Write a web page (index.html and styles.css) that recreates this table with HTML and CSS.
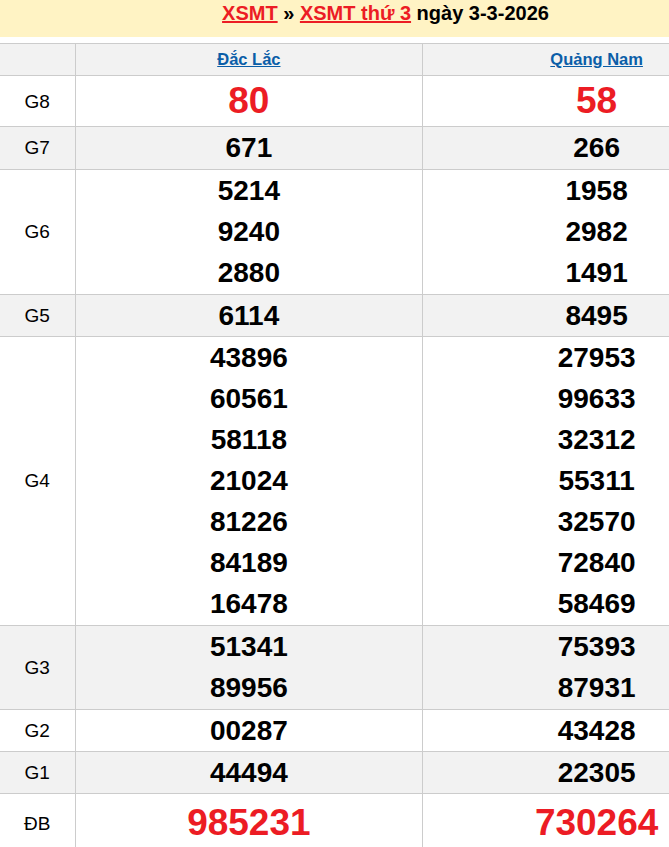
FILE: index.html
```html
<!DOCTYPE html>
<html lang="vi">
<head>
<meta charset="utf-8">
<title>XSMT thứ 3 ngày 3-3-2026</title>
<link rel="stylesheet" href="styles.css">
</head>
<body>
<div class="page">
  <h2 class="title"><a href="#">XSMT</a> » <a href="#">XSMT thứ 3</a> ngày 3-3-2026</h2>
  <table class="kq">
    <colgroup><col class="c-label"><col class="c-prov"><col class="c-prov"></colgroup>
    <thead>
      <tr class="alt head"><th></th><th><a href="#">Đắc Lắc</a></th><th><a href="#">Quảng Nam</a></th></tr>
    </thead>
    <tbody>
      <tr class="g8"><td class="lbl">G8</td><td class="big">80</td><td class="big">58</td></tr>
      <tr class="alt one"><td class="lbl">G7</td><td><div>671</div></td><td><div>266</div></td></tr>
      <tr class="multi"><td class="lbl">G6</td><td><div>5214</div><div>9240</div><div>2880</div></td><td><div>1958</div><div>2982</div><div>1491</div></td></tr>
      <tr class="alt"><td class="lbl">G5</td><td><div>6114</div></td><td><div>8495</div></td></tr>
      <tr class="multi"><td class="lbl">G4</td>
        <td><div>43896</div><div>60561</div><div>58118</div><div>21024</div><div>81226</div><div>84189</div><div>16478</div></td>
        <td><div>27953</div><div>99633</div><div>32312</div><div>55311</div><div>32570</div><div>72840</div><div>58469</div></td></tr>
      <tr class="alt multi"><td class="lbl">G3</td><td><div>51341</div><div>89956</div></td><td><div>75393</div><div>87931</div></td></tr>
      <tr><td class="lbl">G2</td><td><div>00287</div></td><td><div>43428</div></td></tr>
      <tr class="alt"><td class="lbl">G1</td><td><div>44494</div></td><td><div>22305</div></td></tr>
      <tr class="db"><td class="lbl">ĐB</td><td class="big">985231</td><td class="big">730264</td></tr>
    </tbody>
  </table>
</div>
</body>
</html>
```

FILE: styles.css
```css
html, body {
  margin: 0;
  padding: 0;
  overflow: hidden;
  background: #fff;
  font-family: "Liberation Sans", Arial, sans-serif;
}
.page {
  width: 771px;
}
.title {
  margin: 0 0 6px;
  height: 37px;
  line-height: 26px;
  background: #fff3c4;
  text-align: center;
  font-size: 20px;
  font-weight: bold;
  color: #000;
}
.title a {
  color: #ec1c24;
  text-decoration: underline;
}
.kq {
  width: 771px;
  border-collapse: collapse;
  table-layout: fixed;
}
.c-label { width: 75px; }
.kq th, .kq td {
  border: 1px solid #cccccc;
  padding: 0;
  text-align: center;
  vertical-align: middle;
}
.kq tr > :first-child { border-left: none; }
.alt { background: #f2f2f2; }
.head th {
  height: 31px;
  font-size: 16.5px;
  font-weight: bold;
}
.head a {
  color: #0b5ea8;
  text-decoration: underline;
}
.kq td {
  font-size: 28px;
  font-weight: bold;
  line-height: 41px;
  color: #000;
}
.multi td { padding-bottom: 1px; }
.one td { padding-bottom: 1px; }
.kq td.lbl {
  font-size: 19px;
  font-weight: normal;
}
.kq td.big {
  font-size: 37px;
  color: #ec1c24;
  height: 50px;
  line-height: 50px;
}
.db td.big { height: 56px; line-height: 58px; }
```
